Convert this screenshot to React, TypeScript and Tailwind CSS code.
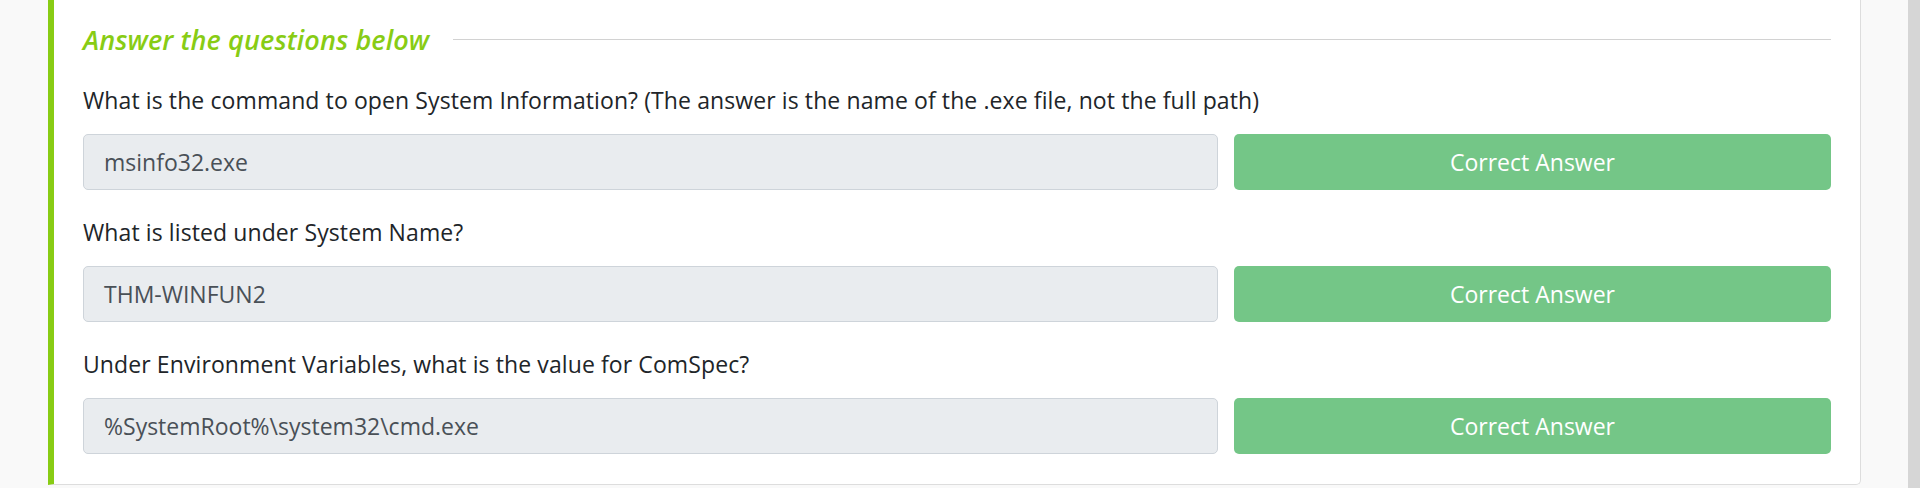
const questions = [
  {
    q: "What is the command to open System Information? (The answer is the name of the .exe file, not the full path)",
    a: "msinfo32.exe",
  },
  { q: "What is listed under System Name?", a: "THM-WINFUN2" },
  {
    q: "Under Environment Variables, what is the value for ComSpec?",
    a: "%SystemRoot%\\system32\\cmd.exe",
  },
];

export default function App() {
  return (
    <div
      className="flex h-[488px] w-[1920px] overflow-hidden bg-[#f9f9f9]"
      style={{ fontFamily: "'Open Sans', 'Noto Sans', sans-serif" }}
    >
      <div className="w-[48px] shrink-0" />

      {/* task card, top is scrolled out of view */}
      <div className="flex h-[485px] w-[1813px] shrink-0 flex-col rounded-br-[5px] border border-t-0 border-l-[6px] border-[#dddddd] border-l-[#88cc14] bg-white pl-[29px] pr-[29px]">
        <div className="flex h-[78px] shrink-0 items-center">
          <h4 className="text-[27px] font-semibold italic leading-none tracking-[0.1px] text-[#88cc14]">
            Answer the questions below
          </h4>
          <div className="ml-[24px] h-px flex-1 bg-[#d2d2d2]" />
        </div>

        <div className="mt-[6px] flex flex-col">
          {questions.map((item) => (
            <div key={item.a} className="mb-[26px] flex flex-col">
              <p className="h-[33px] text-[23px] leading-[33px] tracking-[0.1px] text-[#212529]">
                {item.q}
              </p>
              <div className="mt-[17px] flex h-[56px] gap-[16px]">
                <div className="flex flex-1 items-center rounded-[5px] border border-[#ced4da] bg-[#e9ecef] pl-[20px] text-[23px] text-[#495057]">
                  {item.a}
                </div>
                <button className="flex w-[597px] items-center justify-center rounded-[5px] bg-[#74c687] text-[23px] text-white">
                  Correct Answer
                </button>
              </div>
            </div>
          ))}
        </div>
      </div>

      <div className="flex-1" />
      <div className="w-[12px] shrink-0 bg-[#d6d6d6]" />
    </div>
  );
}
